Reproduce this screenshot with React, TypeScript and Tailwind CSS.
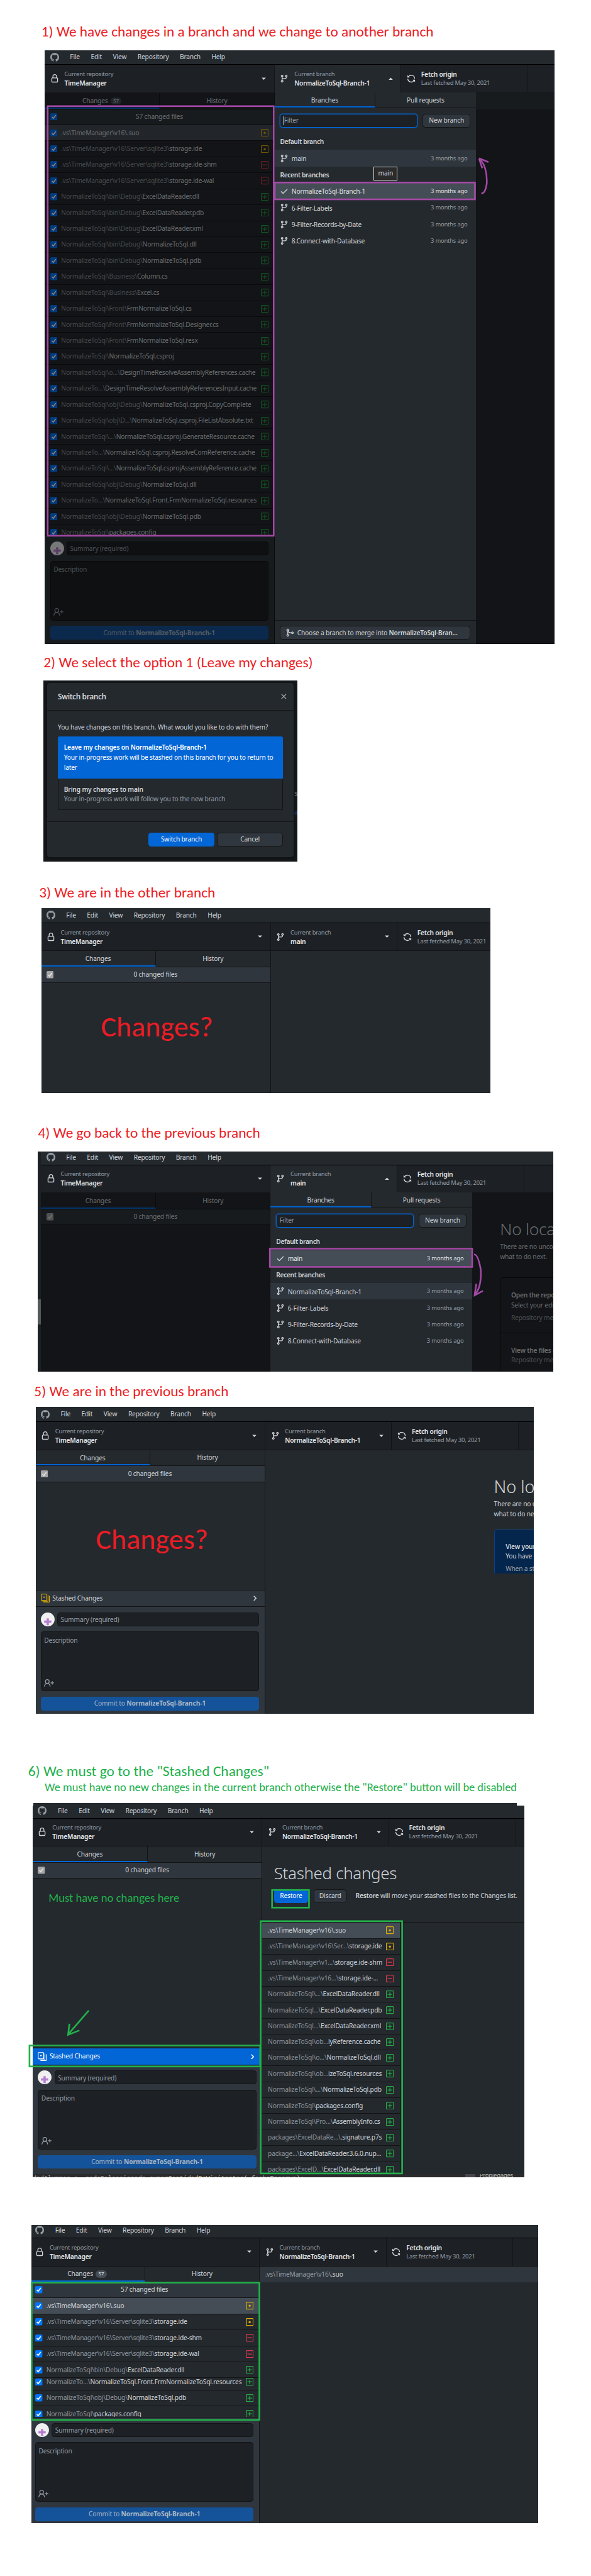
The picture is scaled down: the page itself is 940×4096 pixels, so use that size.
import type { ReactNode } from "react";

type Status = "mod" | "del" | "add";
type FileEntry = [dir: string, name: string, status: Status];

const BRANCH = "NormalizeToSql-Branch-1";

const headFiles: FileEntry[] = [
  [".vs\\TimeManager\\v16\\", ".suo", "mod"],
  [".vs\\TimeManager\\v16\\Server\\sqlite3\\", "storage.ide", "mod"],
  [".vs\\TimeManager\\v16\\Server\\sqlite3\\", "storage.ide-shm", "del"],
  [".vs\\TimeManager\\v16\\Server\\sqlite3\\", "storage.ide-wal", "del"],
  ["NormalizeToSql\\bin\\Debug\\", "ExcelDataReader.dll", "add"],
];

const tailFiles: FileEntry[] = [
  ["NormalizeTo...\\", "NormalizeToSql.Front.FrmNormalizeToSql.resources", "add"],
  ["NormalizeToSql\\obj\\Debug\\", "NormalizeToSql.pdb", "add"],
  ["NormalizeToSql\\", "packages.config", "add"],
];

const allFiles: FileEntry[] = [
  ...headFiles,
  ["NormalizeToSql\\bin\\Debug\\", "ExcelDataReader.pdb", "add"],
  ["NormalizeToSql\\bin\\Debug\\", "ExcelDataReader.xml", "add"],
  ["NormalizeToSql\\bin\\Debug\\", "NormalizeToSql.dll", "add"],
  ["NormalizeToSql\\bin\\Debug\\", "NormalizeToSql.pdb", "add"],
  ["NormalizeToSql\\Business\\", "Column.cs", "add"],
  ["NormalizeToSql\\Business\\", "Excel.cs", "add"],
  ["NormalizeToSql\\Front\\", "FrmNormalizeToSql.cs", "add"],
  ["NormalizeToSql\\Front\\", "FrmNormalizeToSql.Designer.cs", "add"],
  ["NormalizeToSql\\Front\\", "FrmNormalizeToSql.resx", "add"],
  ["NormalizeToSql\\", "NormalizeToSql.csproj", "add"],
  ["NormalizeToSql\\o...\\", "DesignTimeResolveAssemblyReferences.cache", "add"],
  ["NormalizeTo...\\", "DesignTimeResolveAssemblyReferencesInput.cache", "add"],
  ["NormalizeToSql\\obj\\Debug\\", "NormalizeToSql.csproj.CopyComplete", "add"],
  ["NormalizeToSql\\obj\\D...\\", "NormalizeToSql.csproj.FileListAbsolute.txt", "add"],
  ["NormalizeToSql\\...\\", "NormalizeToSql.csproj.GenerateResource.cache", "add"],
  ["NormalizeTo...\\", "NormalizeToSql.csproj.ResolveComReference.cache", "add"],
  ["NormalizeToSql\\...\\", "NormalizeToSql.csprojAssemblyReference.cache", "add"],
  ["NormalizeToSql\\obj\\Debug\\", "NormalizeToSql.dll", "add"],
  ...tailFiles,
];

const stashFiles: FileEntry[] = [
  [".vs\\TimeManager\\v16\\", ".suo", "mod"],
  [".vs\\TimeManager\\v16\\Ser...\\", "storage.ide", "mod"],
  [".vs\\TimeManager\\v1...\\", "storage.ide-shm", "del"],
  [".vs\\TimeManager\\v16...\\", "storage.ide-...", "del"],
  ["NormalizeToSql\\...\\", "ExcelDataReader.dll", "add"],
  ["NormalizeToSql...\\", "ExcelDataReader.pdb", "add"],
  ["NormalizeToSql...\\", "ExcelDataReader.xml", "add"],
  ["NormalizeToSql\\ob...", "lyReference.cache", "add"],
  ["NormalizeToSql\\o...\\", "NormalizeToSql.dll", "add"],
  ["NormalizeToSql\\ob...", "izeToSql.resources", "add"],
  ["NormalizeToSql\\...\\", "NormalizeToSql.pdb", "add"],
  ["NormalizeToSql\\", "packages.config", "add"],
  ["NormalizeToSql\\Pro...\\", "AssemblyInfo.cs", "add"],
  ["packages\\ExcelDataRe...\\", ".signature.p7s", "add"],
  ["package...\\", "ExcelDataReader.3.6.0.nup...", "add"],
  ["packages\\ExcelD...\\", "ExcelDataReader.dll", "add"],
];

/* ---------- icons ---------- */

const paths = {
  github:
    "M8 0C3.58 0 0 3.58 0 8c0 3.54 2.29 6.53 5.47 7.59.4.07.55-.17.55-.38 0-.19-.01-.82-.01-1.49-2.01.37-2.53-.49-2.69-.94-.09-.23-.48-.94-.82-1.13-.28-.15-.68-.52-.01-.53.63-.01 1.08.58 1.23.82.72 1.21 1.87.87 2.33.66.07-.52.28-.87.51-1.07-1.78-.2-3.64-.89-3.64-3.95 0-.87.31-1.59.82-2.15-.08-.2-.36-1.02.08-2.12 0 0 .67-.21 2.2.82.64-.18 1.32-.27 2-.27.68 0 1.36.09 2 .27 1.53-1.04 2.2-.82 2.2-.82.44 1.1.16 1.92.08 2.12.51.56.82 1.27.82 2.15 0 3.07-1.87 3.75-3.65 3.95.29.25.54.73.54 1.48 0 1.07-.01 1.93-.01 2.2 0 .21.15.46.55.38A8.013 8.013 0 0016 8c0-4.42-3.58-8-8-8z",
  branch:
    "M11.75 2.5a.75.75 0 100 1.5.75.75 0 000-1.5zm-2.25.75a2.25 2.25 0 113 2.122V6A2.5 2.5 0 0110 8.5H6a1 1 0 00-1 1v1.128a2.251 2.251 0 11-1.5 0V5.372a2.25 2.25 0 111.5 0v1.836A2.492 2.492 0 016 7h4a1 1 0 001-1v-.628A2.25 2.25 0 019.5 3.25zM4.25 12a.75.75 0 100 1.5.75.75 0 000-1.5zM3.5 3.25a.75.75 0 111.5 0 .75.75 0 01-1.5 0z",
  lock: "M4 4v2h-.25A1.75 1.75 0 002 7.75v5.5c0 .966.784 1.75 1.75 1.75h8.5A1.75 1.75 0 0014 13.25v-5.5A1.75 1.75 0 0012.25 6H12V4a4 4 0 10-8 0zm6.5 2V4a2.5 2.5 0 00-5 0v2h5zM12 7.5h.25a.25.25 0 01.25.25v5.5a.25.25 0 01-.25.25h-8.5a.25.25 0 01-.25-.25v-5.5a.25.25 0 01.25-.25H12z",
  sync: "M8 2.5a5.487 5.487 0 00-4.131 1.869l1.204 1.204A.25.25 0 014.896 6H1.25A.25.25 0 011 5.75V2.104a.25.25 0 01.427-.177l1.38 1.38A7.001 7.001 0 0114.95 7.16a.75.75 0 11-1.49.178A5.501 5.501 0 008 2.5zM1.705 8.005a.75.75 0 01.834.656 5.501 5.501 0 009.592 2.97l-1.204-1.204a.25.25 0 01.177-.427h3.646a.25.25 0 01.25.25v3.646a.25.25 0 01-.427.177l-1.38-1.38A7.001 7.001 0 011.05 8.84a.75.75 0 01.656-.834z",
  check:
    "M13.78 4.22a.75.75 0 010 1.06l-7.25 7.25a.75.75 0 01-1.06 0L2.22 9.28a.75.75 0 011.06-1.06L6 10.94l6.72-6.72a.75.75 0 011.06 0z",
  merge:
    "M5 3.254V3.25v.005a.75.75 0 110-.005v.004zm.45 1.9a2.25 2.25 0 10-1.95.218v5.256a2.25 2.25 0 101.5 0V7.123A5.735 5.735 0 009.25 9h1.378a2.251 2.251 0 100-1.5H9.25a4.25 4.25 0 01-3.8-2.346zM12.75 9a.75.75 0 100-1.5.75.75 0 000 1.5zm-8.5 4.5a.75.75 0 100-1.5.75.75 0 000 1.5z",
};

function Icon({ name, className }: { name: keyof typeof paths; className?: string }) {
  return (
    <svg viewBox="0 0 16 16" className={`h-4 w-4 shrink-0 fill-current ${className ?? ""}`}>
      <path fillRule="evenodd" d={paths[name]} />
    </svg>
  );
}

function StatusIcon({ status }: { status: Status }) {
  const color = { mod: "text-[#dbab09]", del: "text-[#d73a49]", add: "text-[#28a745]" }[status];
  return (
    <svg viewBox="0 0 14 14" className={`h-[14px] w-[14px] shrink-0 ${color}`} fill="none" stroke="currentColor" strokeWidth="1.5">
      <rect x="0.75" y="0.75" width="12.5" height="12.5" rx="1" />
      {status === "mod" && <circle cx="7" cy="7" r="2" fill="currentColor" stroke="none" />}
      {status !== "mod" && <path d="M3 7h8" />}
      {status === "add" && <path d="M7 3v8" />}
    </svg>
  );
}

function StashIcon({ className }: { className: string }) {
  return (
    <svg viewBox="0 0 16 16" className={`h-4 w-4 shrink-0 ${className}`} fill="none" stroke="currentColor" strokeWidth="1.3">
      <rect x="0.8" y="0.8" width="10" height="11.4" rx="0.8" />
      <path d="M3 14h9.2a.8.8 0 00.8-.8V2.5M5 15.6h9.6a.8.8 0 00.8-.8V4" />
      <circle cx="5.8" cy="6.4" r="1.4" fill="currentColor" stroke="none" />
    </svg>
  );
}

function CheckBox({ muted }: { muted?: boolean }) {
  return (
    <svg viewBox="0 0 13 13" className="h-[13px] w-[13px] shrink-0">
      <rect width="13" height="13" rx="2" fill={muted ? "#a5a5a5" : "#0075ff"} />
      <path d="M3 6.8L5.4 9.3L10 3.4" fill="none" stroke={muted ? "#e4e4e4" : "#ffffff"} strokeWidth="1.9" />
    </svg>
  );
}

function Caret({ up }: { up?: boolean }) {
  return (
    <svg viewBox="0 0 8 5" className="h-[5px] w-[8px] shrink-0 fill-[#d1d5da]">
      <path d={up ? "M4 0.5L7.8 4.5H0.2z" : "M0.2 0.5H7.8L4 4.5z"} />
    </svg>
  );
}

/* ---------- application window ---------- */

function ToolbarCell({ icon, top, bottom, caret, className, children }: {
  icon: keyof typeof paths;
  top?: string;
  bottom?: string;
  caret?: "up" | "down";
  className: string;
  children?: ReactNode;
}) {
  return (
    <div className={`flex shrink-0 items-center border-r border-[#141414] pl-[10px] ${className}`}>
      <Icon name={icon} className="text-[#d1d5da]" />
      <div className="ml-[10px] flex-1 text-[11.7px] leading-4 whitespace-nowrap">
        {children ?? (
          <>
            <div className="text-[10.7px] text-[#959da5]">{top}</div>
            <div className="font-semibold tracking-[-0.27px] text-[#e1e4e8]">{bottom}</div>
          </>
        )}
      </div>
      {caret && (
        <div className="mr-[14px] flex">
          <Caret up={caret === "up"} />
        </div>
      )}
    </div>
  );
}

function MenuBar() {
  return (
    <div className="flex h-[27px] shrink-0 items-center border-b border-black bg-[#24292e] pl-[10px] text-[11.7px] text-[#d1d5da]">
      <Icon name="github" className="text-[#959da5]" />
      <div className="ml-[20px] flex gap-[20px]">
        {["File", "Edit", "View", "Repository", "Branch", "Help"].map((m) => (
          <span key={m}>{m}</span>
        ))}
      </div>
    </div>
  );
}

function AppWindow({ branch, open, dim, sidebar, menu, className, children }: {
  branch: string;
  open?: boolean;
  dim?: boolean;
  sidebar: ReactNode;
  menu?: ReactNode;
  className: string;
  children?: ReactNode;
}) {
  return (
    <div className={`relative flex flex-col bg-[#24292e] ${className}`}>
      <MenuBar />
      <div className="flex h-[51px] shrink-0 border-b-2 border-[#141414] bg-[#1d2125]">
        <ToolbarCell icon="lock" top="Current repository" bottom="TimeManager" caret="down" className="w-[417px]" />
        <ToolbarCell
          icon="branch"
          top="Current branch"
          bottom={branch}
          caret={open ? "up" : "down"}
          className={open ? "w-[230px] bg-[#24292e]" : "w-[230px]"}
        />
        <ToolbarCell icon="sync" className="w-[230px]">
          <div className="font-semibold tracking-[-0.27px] text-[#e1e4e8]">Fetch origin</div>
          <div className="text-[10.7px] text-[#959da5]">Last fetched May 30, 2021</div>
        </ToolbarCell>
      </div>
      <div className="relative flex min-h-0 flex-1">
        <div className="flex w-[417px] shrink-0 flex-col overflow-hidden border-r border-[#141414]">{sidebar}</div>
        <div className="min-w-0 flex-1">{children}</div>
        {dim && <div className="absolute inset-0 bg-black/50" />}
      </div>
      {menu}
    </div>
  );
}

function SideTabs({ count }: { count?: number }) {
  return (
    <div className="flex h-[29px] shrink-0 border-b border-[#141414] text-[11.7px] text-[#d1d5da]">
      <div className="flex w-[209px] items-center justify-center gap-[5px] border-r border-b-[3px] border-r-[#141414] border-b-[#0366d6] pt-[3px]">
        Changes
        {count && (
          <span className="rounded-full bg-[#444d56] px-[5px] text-[9px] leading-[13px] font-semibold">{count}</span>
        )}
      </div>
      <div className="flex flex-1 items-center justify-center">History</div>
    </div>
  );
}

function ChangedHeader({ label, muted }: { label: string; muted?: boolean }) {
  return (
    <div className="flex h-[29px] shrink-0 items-center border-b border-[#141414] bg-[#2f363d] px-[10px] text-[11.7px] text-[#d1d5da]">
      <CheckBox muted={muted} />
      <div className="mr-[13px] flex-1 text-center">{label}</div>
    </div>
  );
}

function FileRow({ file, check, selected, short }: {
  file: FileEntry;
  check?: boolean;
  selected?: boolean;
  short?: boolean;
}) {
  const [dir, name, status] = file;
  return (
    <div
      className={`flex shrink-0 items-center border-b border-[#141414] pl-[10px] text-[11.7px] whitespace-nowrap ${
        short ? "h-[28px]" : "h-[29px]"
      } ${selected ? "bg-[#444d56]" : ""} ${check ? "pr-[10px]" : "pr-[11px]"}`}
    >
      {check && (
        <div className="mr-[7px] flex">
          <CheckBox />
        </div>
      )}
      <div className="min-w-0 flex-1">
        <span className={selected ? "text-[#d1d5da]" : "text-[#8b929a]"}>{dir}</span>
        <span className="text-[#d1d5da]">{name}</span>
      </div>
      <StatusIcon status={status} />
    </div>
  );
}

function CommitForm({ branch }: { branch: string }) {
  return (
    <div className="flex h-[197px] shrink-0 flex-col border-t border-[#141414] bg-[#2f363d] px-[10px] pt-[10px] text-[11.7px] text-[#959da5]">
      <div className="flex gap-[5px]">
        <svg viewBox="0 0 25 25" className="h-[25px] w-[25px]">
          <circle cx="12.5" cy="12.5" r="12.5" fill="#f0f0f0" />
          <path d="M10.5 10.5h4v4h4.5v4h-4.5v4.5h-4v-4.5H6v-4h4.5z" fill="#b57bd0" />
        </svg>
        <div className="flex h-[25px] flex-1 items-center rounded-[5px] border border-[#141414] bg-[#1d2125] px-[5px] pt-[2px]">
          Summary (required)
        </div>
      </div>
      <div className="mt-[10px] flex h-[108px] flex-col justify-between rounded-[5px] border border-[#141414] bg-[#1d2125] px-[5px] pt-[6px] pb-[7px]">
        <div className="leading-4">Description</div>
        <svg viewBox="0 0 18 14" className="h-[14px] w-[18px]" fill="none" stroke="#959da5" strokeWidth="1.4">
          <circle cx="6" cy="4.2" r="3.4" />
          <path d="M0.8 13.5c.2-3.2 2.3-5.6 5.2-5.6s5 2.4 5.2 5.6M12 6.8h6M15 3.8v6" />
        </svg>
      </div>
      <div className="mt-[10px] flex h-[25px] items-center justify-center gap-[3px] rounded-[5px] bg-[#14539a] text-[#a9b6c4]">
        Commit to <b className="font-bold tracking-[-0.1px]">{branch}</b>
      </div>
    </div>
  );
}

function StashRow({ active }: { active?: boolean }) {
  return (
    <div
      className={`flex h-[30px] shrink-0 items-center border-t border-[#141414] px-[10px] text-[11.7px] ${
        active ? "bg-[#0366d6] text-white" : "bg-[#2f363d] text-[#d1d5da]"
      }`}
    >
      <StashIcon className={active ? "text-white" : "text-[#dbab09]"} />
      <span className="ml-[5px] flex-1">Stashed Changes</span>
      <svg viewBox="0 0 6 10" className="mr-[4px] h-[10px] w-[6px]" fill="none" stroke="currentColor" strokeWidth="1.7">
        <path d="M0.8 0.8L5 5L0.8 9.2" />
      </svg>
    </div>
  );
}

function BranchRow({ name, selected, hover }: { name: string; selected?: boolean; hover?: boolean }) {
  return (
    <div
      className={`flex h-[30px] items-center pr-[15px] pl-[10px] ${
        selected ? "bg-[#444d56] text-[#e1e4e8]" : hover ? "bg-[#2f363d]" : ""
      }`}
    >
      <Icon name={selected ? "check" : "branch"} className="mr-[5px] text-[#d1d5da]" />
      <span className="flex-1 pt-[2px]">{name}</span>
      <span className={`text-[10.7px] ${selected ? "text-[#e1e4e8]" : "text-[#959da5]"}`}>3 months ago</span>
    </div>
  );
}

function BranchMenu({ current, hovered, merge, focus }: {
  current: string;
  hovered: string;
  merge?: boolean;
  focus?: boolean;
}) {
  const row = (name: string) => (
    <BranchRow key={name} name={name} selected={name === current} hover={name === hovered} />
  );
  return (
    <div className="absolute top-[77px] bottom-0 left-[417px] flex w-[365px] flex-col bg-[#24292e] text-[11.7px] text-[#d1d5da]">
      <div className="flex h-[28px] shrink-0 border-b border-[#141414]">
        <div className="flex w-[183px] items-center justify-center border-r border-b-[3px] border-r-[#141414] border-b-[#0366d6] pt-[3px]">
          Branches
        </div>
        <div className="flex flex-1 items-center justify-center pt-[1px]">Pull requests</div>
      </div>
      <div className="flex gap-[10px] px-[10px] pt-[10px]">
        <div className="flex h-[25px] w-[249px] items-center rounded-[5px] border border-[#0366d6] bg-[#1d2125] px-[5px] text-[#959da5] shadow-[0_0_0_1px_#0366d680]">
          {focus && <span className="h-[16px] w-px bg-white" />}
          Filter
        </div>
        <div className="flex h-[25px] flex-1 items-center justify-center rounded-[5px] border border-[#141414] bg-[#2f363d] whitespace-nowrap">
          New branch
        </div>
      </div>
      <div className="mt-[11px] flex h-[30px] items-center pl-[10px] font-semibold tracking-[-0.4px]">Default branch</div>
      {row("main")}
      <div className="flex h-[30px] items-center pt-[2px] pl-[10px] font-semibold tracking-[-0.4px]">Recent branches</div>
      {[BRANCH, "6-Filter-Labels", "9-Filter-Records-by-Date", "8.Connect-with-Database"]
        .map(row)}
      {merge && (
        <div className="mt-auto h-[44px] border-t border-[#141414] px-[10px] pt-[10px]">
          <div className="flex h-[25px] items-center rounded-[5px] border border-[#141414] bg-[#2f363d] pl-[9px] whitespace-nowrap">
            <Icon name="merge" className="mr-[5px]" />
            Choose a branch to merge into&nbsp;<b className="font-semibold">NormalizeToSql-Bran...</b>
          </div>
        </div>
      )}
    </div>
  );
}

/* ---------- page ---------- */

function StepTitle({ className, children }: { className: string; children: ReactNode }) {
  return (
    <h2 className={`shrink-0 font-[Carlito,Lato,sans-serif] tracking-normal whitespace-nowrap ${className}`}>
      {children}
    </h2>
  );
}

function SwitchDialog() {
  return (
    <div className="relative mt-[17px] ml-[79px] h-[328px] w-[461px] shrink-0 overflow-hidden bg-[#15191c] pt-[5px] pl-[6px]">
      <div className="flex h-[316px] w-[448px] flex-col rounded-[5px] bg-[#24292e] text-[11.7px] text-[#d1d5da] shadow-[0_1px_5px_2px_#101214]">
        <div className="flex h-[50px] items-center justify-between border-b border-[#141414] pr-[13px] pl-[20px]">
          <span className="text-[13.5px] font-semibold tracking-[-0.4px]">Switch branch</span>
          <svg viewBox="0 0 10 10" className="h-[10px] w-[10px]" stroke="#b4b9be" strokeWidth="1.3">
            <path d="M0.8 0.8L9.2 9.2M9.2 0.8L0.8 9.2" />
          </svg>
        </div>
        <div className="flex flex-1 flex-col px-[20px] leading-[18px]">
          <p className="mt-[21px] tracking-[-0.17px] whitespace-nowrap">
            You have changes on this branch. What would you like to do with them?
          </p>
          <div className="mt-[8px] h-[76px] rounded-t-[3px] bg-[#0366d6] px-[11px] pt-[11px] text-white">
            <div className="font-semibold">Leave my changes on {BRANCH}</div>
            <div className="whitespace-nowrap">
              Your in-progress work will be stashed on this branch for you to return to
              <br />
              later
            </div>
          </div>
          <div className="h-[57px] rounded-b-[3px] border border-t-0 border-[#141414] px-[10px] pt-[11px]">
            <div className="font-semibold">Bring my changes to main</div>
            <div className="text-[#959da5]">Your in-progress work will follow you to the new branch</div>
          </div>
        </div>
        <div className="flex h-[66px] justify-end gap-[5px] border-t border-[#141414] pt-[20px] pr-[20px]">
          <div className="flex h-[25px] w-[120px] items-center justify-center rounded-[5px] bg-[#0366d6] text-white">
            Switch branch
          </div>
          <div className="flex h-[25px] w-[119px] items-center justify-center rounded-[5px] border border-[#141414] bg-[#2f363d]">
            Cancel
          </div>
        </div>
      </div>
      <span className="absolute top-[196px] left-[455px] text-[11.7px] leading-4 text-[#7d8083]">s</span>
      <span className="absolute top-[230px] left-[455px] text-[11.7px] leading-4 text-[#1c4a80]">a</span>
    </div>
  );
}

export default function App() {
  return (
    <main className="relative flex h-[4671px] w-[1072px] flex-col overflow-hidden bg-white font-['Noto_Sans',sans-serif] tracking-[-0.22px] [zoom:0.8768]">
      <StepTitle className="mt-[41px] ml-[75px] text-[26.67px] leading-8 text-[#ed1c24]">
        1) We have changes in a branch and we change to another branch
      </StepTitle>
      <div className="mt-[18px] ml-[81px] h-[1077px] w-[925px] shrink-0 overflow-hidden">
        <AppWindow
          className="h-full"
          branch={BRANCH}
          open
          dim
          menu={<BranchMenu current={BRANCH} hovered="main" merge focus />}
          sidebar={
            <>
              <SideTabs count={57} />
              <ChangedHeader label="57 changed files" />
              <div className="flex min-h-0 flex-1 flex-col overflow-hidden">
                {allFiles.map((f, i) => (
                  <FileRow key={i} file={f} check selected={i === 0} />
                ))}
              </div>
              <CommitForm branch={BRANCH} />
            </>
          }
        >
          <div className="h-[29px] bg-[#2f363d]" />
        </AppWindow>
      </div>

      <StepTitle className="mt-[17px] ml-[79px] text-[26.67px] leading-8 text-[#ed1c24]">
        2) We select the option 1 (Leave my changes)
      </StepTitle>
      <SwitchDialog />

      <StepTitle className="mt-[40px] ml-[71px] text-[26.67px] leading-8 text-[#ed1c24]">
        3) We are in the other branch
      </StepTitle>
      <div className="mt-[13px] ml-[75px] h-[335px] w-[815px] shrink-0 overflow-hidden">
        <AppWindow
          className="-ml-px h-full"
          branch="main"
          sidebar={
            <>
              <SideTabs />
              <ChangedHeader label="0 changed files" muted />
            </>
          }
        />
      </div>

      <StepTitle className="mt-[56px] ml-[69px] text-[26.67px] leading-8 text-[#ed1c24]">
        4) We go back to the previous branch
      </StepTitle>
      <div className="mt-[18px] ml-[69px] flex h-[400px] w-[935px] shrink-0 overflow-hidden">
        <div className="w-[5px] shrink-0 bg-[#1c2024] pt-[268px]">
          <div className="h-[46px] bg-[#55595c]" />
        </div>
        <AppWindow
          className="-mt-[2px] h-[402px] flex-1"
          branch="main"
          open
          dim
          menu={<BranchMenu current="main" hovered={BRANCH} />}
          sidebar={
            <>
              <SideTabs />
              <ChangedHeader label="0 changed files" muted />
            </>
          }
        >
          <div className="ml-[416px] w-[500px] pt-[45px] text-[11.7px] leading-[18px] text-[#d1d5da]">
            <div className="text-[30px] leading-[40px] font-light tracking-[-0.3px]">No local changes</div>
            <div className="mt-[4px]">There are no uncommitted changes in this repository.</div>
            <div>what to do next.</div>
            <div className="mt-[28px] rounded-[5px] border border-[#0c0e10] px-[19px]">
              <div className="h-[99px] pt-[22px]">
                <div className="font-semibold">Open the repository in your external editor</div>
                <div>Select your editor in Options</div>
                <div className="mt-[5px] text-[#959da5]">Repository menu</div>
              </div>
              <div className="-mx-[19px] h-[90px] border-t border-[#0c0e10] px-[19px] pt-[22px]">
                <div className="font-semibold">View the files of your repository</div>
                <div className="text-[#959da5]">Repository menu</div>
              </div>
            </div>
          </div>
        </AppWindow>
      </div>

      <StepTitle className="mt-[19px] ml-[62px] text-[26.67px] leading-8 text-[#ed1c24]">
        5) We are in the previous branch
      </StepTitle>
      <div className="mt-[12px] ml-[65px] h-[557px] w-[903px] shrink-0 overflow-hidden bg-[#24292e] pt-px">
        <AppWindow
          className="-ml-px h-[558px]"
          branch={BRANCH}
          sidebar={
            <>
              <SideTabs />
              <ChangedHeader label="0 changed files" muted />
              <div className="flex-1" />
              <StashRow />
              <CommitForm branch={BRANCH} />
            </>
          }
        >
          <div className="ml-[415px] w-[500px] pt-[46px] text-[11.7px] leading-[18px] text-[#d1d5da]">
            <div className="text-[31px] leading-[40px] font-light tracking-[-0.1px]">No local changes</div>
            <div className="mt-[3px]">There are no uncommitted changes in this repository.</div>
            <div>what to do next.</div>
            <div className="mt-[19px] h-[80px] rounded-tl-[5px] border border-b-0 border-[#0b4180] bg-[#05264c] px-[20px] pt-[21px]">
              <div className="font-semibold">View your stashed changes</div>
              <div>You have stashed work</div>
              <div className="mt-[5px] text-[#959da5]">When a stash exists</div>
            </div>
          </div>
        </AppWindow>
      </div>

      <StepTitle className="mt-[88px] ml-[51px] text-[26.67px] leading-8 text-[#22b14c]">
        6) We must go to the "Stashed Changes"
      </StepTitle>
      <StepTitle className="mt-[1px] ml-[81px] text-[21px] leading-6 text-[#22b14c]">
        We must have no new changes in the current branch otherwise the "Restore" button will be disabled
      </StepTitle>
      <div className="mt-[17px] ml-[61px] h-[4px] w-[877px] shrink-0 bg-[#24292e]" />
      <div className="ml-[59px] h-[675px] w-[892px] shrink-0 overflow-hidden">
        <AppWindow
          className="-mt-[3px] h-[672px]"
          branch={BRANCH}
          sidebar={
            <>
              <SideTabs />
              <ChangedHeader label="0 changed files" muted />
              <div className="flex-1" />
              <StashRow active />
              <CommitForm branch={BRANCH} />
              <div className="h-[2px] shrink-0 bg-[#2f363d]" />
            </>
          }
        >
          <div className="h-[138px] border-b border-[#141414] pt-[28px] pl-[21px] text-[11.7px] text-[#d1d5da]">
            <div className="text-[29.6px] leading-[40px] font-light tracking-[-0.38px]">Stashed changes</div>
            <div className="mt-[9px] flex items-center whitespace-nowrap">
              <div className="flex h-[25px] w-[62px] items-center justify-center rounded-[5px] bg-[#0366d6] text-white">
                Restore
              </div>
              <div className="ml-[10px] flex h-[25px] w-[60px] items-center justify-center rounded-[5px] border border-[#141414] bg-[#2f363d]">
                Discard
              </div>
              <div className="ml-[16px]">
                <b className="font-semibold">Restore</b> will move your stashed files to the Changes list.
              </div>
            </div>
          </div>
          <div className="flex h-[456px] w-[250px] flex-col overflow-hidden border-r border-[#141414]">
            {stashFiles.map((f, i) => (
              <FileRow key={i} file={f} selected={i === 0} short={i === 7} />
            ))}
          </div>
        </AppWindow>
        <div className="flex h-[6px] overflow-hidden bg-[#2b2a2d] font-['Liberation_Mono',monospace] text-[12px] leading-[16px] tracking-[-0.03em] whitespace-pre text-[#b5b7ad]">
          <div className="w-[785px]">
            dadAlumnos + _sedeSeleccionada.<span className="text-[#c5c58c]">sumarCantidadDeVisitantes</span>( fechaReserva);
          </div>
          <div className="w-[18px] bg-[#48464d]" />
          <div className="-mt-[6px] ml-[8px] font-['Noto_Sans',sans-serif] text-[11px]">Propiedades</div>
        </div>
      </div>

      <div className="mt-[86px] ml-[57px] h-[541px] w-[919px] shrink-0 overflow-hidden">
        <AppWindow
          className="-mt-[3px] -ml-[3px] h-[548px]"
          branch={BRANCH}
          sidebar={
            <>
              <SideTabs count={57} />
              <ChangedHeader label="57 changed files" />
              {headFiles.map((f, i) => (
                <FileRow key={i} file={f} check selected={i === 0} />
              ))}
              <div className="flex min-h-0 flex-1 flex-col overflow-hidden">
                <div className="-mt-[7px] flex flex-col">
                  {tailFiles.map((f, i) => (
                    <FileRow key={i} file={f} check />
                  ))}
                </div>
              </div>
              <CommitForm branch={BRANCH} />
            </>
          }
        >
          <div className="flex h-[29px] items-center bg-[#2f363d] pl-[10px] text-[11.7px] text-[#d1d5da]">
            <span className="text-[#959da5]">.vs\TimeManager\v16\</span>.suo
          </div>
        </AppWindow>
      </div>

      {/* hand-drawn annotations lying over the windows */}
      <div className="absolute top-[302px] left-[678px] flex h-[25px] w-[43px] items-center justify-center border border-[#d8d8d8] bg-[#2b2b2b] text-[11.7px] text-[#d1d5da]">
        main
      </div>
      <div className="absolute top-[1829px] left-[183px] font-[Carlito,Lato,sans-serif] text-[52.5px] leading-[64px] tracking-normal text-[#ed1c24]">
        Changes?
      </div>
      <div className="absolute top-[2759px] left-[174px] font-[Carlito,Lato,sans-serif] text-[52.5px] leading-[64px] tracking-normal text-[#ed1c24]">
        Changes?
      </div>
      <div className="absolute top-[3429px] left-[88px] font-[Carlito,Lato,sans-serif] text-[21.33px] leading-6 tracking-normal whitespace-nowrap text-[#22b14c]">
        Must have no changes here
      </div>
      <svg viewBox="0 0 1072 4671" className="absolute inset-0 h-[4671px] w-[1072px]" fill="none" strokeWidth="3">
        <g stroke="#a349a4">
          <rect x="86.5" y="192.5" width="410" height="779" />
          <rect x="498.5" y="331" width="363" height="30.5" />
          <path d="M873 350.5Q880 352 883 333Q884 303 871 289M869 288L875 305M869 287L886 294" strokeLinejoin="round" />
          <rect x="489.5" y="2264.5" width="367" height="33" />
          <path d="M860 2275Q867 2274 872 2302Q874 2335 861 2348M864 2328L861 2349L876 2341" />
        </g>
        <g stroke="#22b14c">
          <rect x="493.5" y="3427.5" width="67" height="32" />
          <rect x="473" y="3484" width="256.5" height="457.5" />
          <rect x="53.5" y="3709.5" width="418.5" height="38" />
          <path d="M161 3646L123 3690M126 3670L123.500 3690L144 3682" />
          <rect x="57.500" y="4139.500" width="413" height="249" />
        </g>
      </svg>
    </main>
  );
}
